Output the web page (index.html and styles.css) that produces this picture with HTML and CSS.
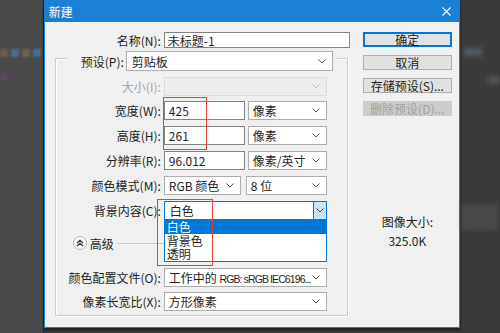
FILE: index.html
```html
<!DOCTYPE html>
<html lang="zh-CN">
<head>
    <meta charset="UTF-8">
    <title>新建</title>
    <link rel="stylesheet" href="styles.css">
</head>
<body>
    <div class="desktop">
        <div class="backdrop-left">
            <div class="swatches">
                <span class="sw sw-brown"></span>
                <span class="sw sw-blue"></span>
                <span class="sw sw-tan"></span>
                <span class="sw sw-blue"></span>
            </div>
            <span class="sw sw-purple"></span>
        </div>

        <div class="dialog">
            <div class="titlebar">
                <span>新建</span>
                <svg class="close" width="9" height="9" viewBox="0 0 9 9"><path d="M0.5 0.5L8.5 8.5M8.5 0.5L0.5 8.5" stroke="#fff" stroke-width="1.1"/></svg>
            </div>

            <div class="dialog-body">
                <div class="form">
                    <div class="row name-row">
                        <label>名称(N):</label>
                        <div class="field name-field">未标题-1</div>
                    </div>

                    <div class="group">
                        <div class="preset-row">
                            <label>预设(P):</label>
                            <div class="select preset-select">剪贴板<svg class="chev" width="8" height="5" viewBox="0 0 8 5"><path d="M0.5 0.5L4 4L7.5 0.5" fill="none" stroke="#555"/></svg></div>
                        </div>

                        <div class="row disabled">
                            <label>大小(I):</label>
                            <div class="select wide"><svg class="chev" width="8" height="5" viewBox="0 0 8 5"><path d="M0.5 0.5L4 4L7.5 0.5" fill="none" stroke="#bbb"/></svg></div>
                        </div>

                        <div class="row first-size">
                            <label>宽度(W):</label>
                            <div class="field num">425</div>
                            <div class="select unit">像素<svg class="chev" width="8" height="5" viewBox="0 0 8 5"><path d="M0.5 0.5L4 4L7.5 0.5" fill="none" stroke="#555"/></svg></div>
                        </div>

                        <div class="row">
                            <label>高度(H):</label>
                            <div class="field num">261</div>
                            <div class="select unit">像素<svg class="chev" width="8" height="5" viewBox="0 0 8 5"><path d="M0.5 0.5L4 4L7.5 0.5" fill="none" stroke="#555"/></svg></div>
                        </div>

                        <div class="row">
                            <label>分辨率(R):</label>
                            <div class="field num">96.012</div>
                            <div class="select unit">像素/英寸<svg class="chev" width="8" height="5" viewBox="0 0 8 5"><path d="M0.5 0.5L4 4L7.5 0.5" fill="none" stroke="#555"/></svg></div>
                        </div>

                        <div class="row">
                            <label>颜色模式(M):</label>
                            <div class="select mode">RGB 颜色<svg class="chev" width="8" height="5" viewBox="0 0 8 5"><path d="M0.5 0.5L4 4L7.5 0.5" fill="none" stroke="#555"/></svg></div>
                            <div class="select bits">8 位<svg class="chev" width="8" height="5" viewBox="0 0 8 5"><path d="M0.5 0.5L4 4L7.5 0.5" fill="none" stroke="#555"/></svg></div>
                        </div>

                        <div class="row">
                            <label>背景内容(C):</label>
                            <div class="select wide focused">
                                <span class="bg-value">白色</span>
                                <span class="drop-btn"><svg width="8" height="5" viewBox="0 0 8 5"><path d="M0.5 0.5L4 4L7.5 0.5" fill="none" stroke="#444"/></svg></span>
                                <ul class="dropdown">
                                    <li class="picked">白色</li>
                                    <li>背景色</li>
                                    <li>透明</li>
                                </ul>
                            </div>
                        </div>

                        <div class="advanced">
                            <span class="toggle"><svg width="8" height="8" viewBox="0 0 8 8"><path d="M1 4L4 1.2L7 4M1 7L4 4.2L7 7" fill="none" stroke="#333" stroke-width="1.2"/></svg></span>
                            <span>高级</span>
                            <span class="rule"></span>
                        </div>

                        <div class="row profile-row">
                            <label>颜色配置文件(O):</label>
                            <div class="select wide"><span class="clip">工作中的 <span class="latin">RGB: sRGB IEC6196...</span></span><svg class="chev" width="8" height="5" viewBox="0 0 8 5"><path d="M0.5 0.5L4 4L7.5 0.5" fill="none" stroke="#555"/></svg></div>
                        </div>

                        <div class="row aspect-row">
                            <label>像素长宽比(X):</label>
                            <div class="select wide">方形像素<svg class="chev" width="8" height="5" viewBox="0 0 8 5"><path d="M0.5 0.5L4 4L7.5 0.5" fill="none" stroke="#555"/></svg></div>
                        </div>
                    </div>
                </div>

                <div class="side">
                    <div class="btn primary">确定</div>
                    <div class="btn cancel">取消</div>
                    <div class="btn">存储预设(S)...</div>
                    <div class="btn off">删除预设(D)...</div>
                    <div class="image-size">
                        <div>图像大小:</div>
                        <div>325.0K</div>
                    </div>
                </div>
            </div>

            <div class="mark mark-size"></div>
            <div class="mark mark-bg"></div>
        </div>

        <div class="backdrop-right">
            <span class="patch patch-a"></span>
            <span class="patch patch-b"></span>
            <span class="patch patch-c"></span>
        </div>
    </div>
</body>
</html>
```

FILE: styles.css
```css
body {
    margin: 0;
    width: 500px;
    height: 333px;
    overflow: hidden;
    background: #3e3e3e;
    font-family: "Noto Sans CJK SC", "Microsoft YaHei", sans-serif;
    font-size: 12px;
    color: #1e1e1e;
}
.desktop {
    display: flex;
    height: 333px;
}

/* blurred photoshop workspace around the dialog */
.backdrop-left {
    width: 43px;
    background: #4a4a4a;
    border-right: 1px solid #2c2c2c;
    padding-top: 49px;
}
.swatches {
    display: flex;
    gap: 3px;
}
.sw {
    display: block;
    width: 8px;
    height: 8px;
    filter: blur(1px);
}
.sw-brown { background: #6d5a48; }
.sw-blue { background: #4d6b88; }
.sw-tan { background: #6a624e; }
.sw-purple {
    background: #5b4a5e;
    margin-top: 16px;
}
.backdrop-right {
    flex: 1;
    background: #3b3b3b;
    display: flex;
    flex-direction: column;
}
.patch {
    display: block;
    filter: blur(2px);
}
.patch-a {
    margin: 48px 0 0 4px;
    width: 18px;
    height: 8px;
    background: #4f5c68;
}
.patch-b {
    margin: 20px 0 0 28px;
    width: 12px;
    height: 8px;
    background: #555;
}
.patch-c {
    margin: 120px 0 0 2px;
    width: 36px;
    height: 26px;
    background: #4a4a4a;
}

/* dialog window */
.dialog {
    position: relative;
    width: 418px;
    height: 328px;
    box-sizing: border-box;
    border: 1px solid #1b7fd3;
    border-top: 0;
    background: #f0f0f0;
    box-shadow: 0 2px 3px rgba(0, 0, 0, 0.6);
}
.titlebar {
    height: 22px;
    background: #1b7fd3;
    color: #fff;
    display: flex;
    align-items: center;
    justify-content: space-between;
    padding: 0 8px 0 4px;
}
.dialog-body {
    display: flex;
}
.form {
    width: 305px;
}

.row {
    display: flex;
    align-items: center;
    height: 19px;
    margin-top: 6px;
}
.row label {
    width: 105px;
    margin-right: 3px;
    text-align: right;
    white-space: nowrap;
}
.name-row {
    height: 16px;
    margin-top: 10px;
}
.name-row label {
    width: 116px;
}

.field {
    height: 100%;
    box-sizing: border-box;
    background: #fff;
    border: 1px solid #828282;
    padding-left: 4px;
    display: flex;
    align-items: center;
}
.name-field {
    width: 186px;
    padding-left: 3px;
}
.num {
    width: 81px;
}

.select {
    position: relative;
    height: 100%;
    box-sizing: border-box;
    background: #fff;
    border: 1px solid #adadad;
    padding-left: 4px;
    display: flex;
    align-items: center;
    white-space: nowrap;
}
.chev {
    margin-left: auto;
    margin-right: 6px;
    flex: none;
}
.clip {
    flex: 1;
    min-width: 0;
    overflow: hidden;
    margin-right: 1px;
}
.latin {
    font-family: "Liberation Sans", sans-serif;
    font-size: 10.5px;
    letter-spacing: -0.9px;
}
.wide { width: 163px; }
.unit {
    width: 79px;
    margin-left: 3px;
}
.mode { width: 77px; }
.bits {
    width: 81px;
    margin-left: 5px;
}

/* group box with the preset row sitting on its top edge */
.group {
    margin: 10px 0 0 10px;
    width: 293px;
    box-sizing: border-box;
    border: 1px solid #cacaca;
    box-shadow: inset 1px 1px 0 #fff, 1px 1px 0 #fff;
    padding-bottom: 4px;
}
.preset-row {
    display: flex;
    align-items: center;
    width: 270px;
    height: 20px;
    margin: -8px 0 0 11px;
    background: #f0f0f0;
}
.preset-row label {
    width: 57px;
    margin-right: 2px;
    text-align: right;
}
.preset-select {
    width: 207px;
    padding-left: 5px;
}

.disabled label {
    color: #a3a3a3;
}
.disabled .select {
    background: #ececec;
    border-color: #dadada;
}
.first-size {
    margin-top: 5px;
}

.focused {
    border-color: #0078d7;
    padding-left: 5px;
}
.drop-btn {
    margin-left: auto;
    width: 13px;
    height: 100%;
    box-sizing: border-box;
    background: #cce4f7;
    border-left: 1px solid #0078d7;
    display: flex;
    align-items: center;
    justify-content: center;
}
.dropdown {
    position: absolute;
    top: 100%;
    left: -1px;
    width: 163px;
    box-sizing: border-box;
    margin: 0;
    padding: 0;
    list-style: none;
    background: #fff;
    border: 1px solid #0078d7;
    z-index: 2;
}
.dropdown li {
    line-height: 13.5px;
    padding-left: 2px;
}
.dropdown .picked {
    background: #0078d7;
    color: #fff;
}

.advanced {
    display: flex;
    align-items: center;
    height: 14px;
    margin-top: 16px;
}
.toggle {
    width: 14px;
    height: 14px;
    box-sizing: border-box;
    margin: 0 3px 0 17px;
    border: 1px solid #b5b5b5;
    border-radius: 50%;
    background: #f8f8f8;
    display: flex;
    align-items: center;
    justify-content: center;
}
.rule {
    flex: 1;
    height: 1px;
    background: #c8c8c8;
    margin: 0 19px 0 4px;
}
.profile-row {
    margin-top: 18px;
}
.aspect-row {
    margin-top: 5px;
}

/* buttons column */
.side {
    width: 89px;
    margin-left: 13px;
    display: flex;
    flex-direction: column;
}
.btn {
    height: 15px;
    box-sizing: border-box;
    background: #e1e1e1;
    border: 1px solid #adadad;
    display: flex;
    align-items: center;
    justify-content: center;
    line-height: 1;
    margin-top: 8px;
    white-space: nowrap;
}
.primary {
    margin-top: 10px;
    border-color: #0078d7;
    box-shadow: inset 0 0 0 1px #0078d7;
}
.cancel {
    margin-top: 8px;
}
.btn.off {
    background: #cccccc;
    border-color: #cccccc;
    color: #a0a0a0;
}
.image-size {
    margin-top: 96px;
    text-align: center;
    line-height: 19px;
}

/* red annotation boxes drawn over the screenshot */
.mark {
    position: absolute;
    border: 1.5px solid #e4403c;
    z-index: 3;
}
.mark-size {
    left: 118px;
    top: 97px;
    width: 42px;
    height: 51px;
}
.mark-bg {
    left: 112px;
    top: 199px;
    width: 54px;
    height: 65px;
}
```
